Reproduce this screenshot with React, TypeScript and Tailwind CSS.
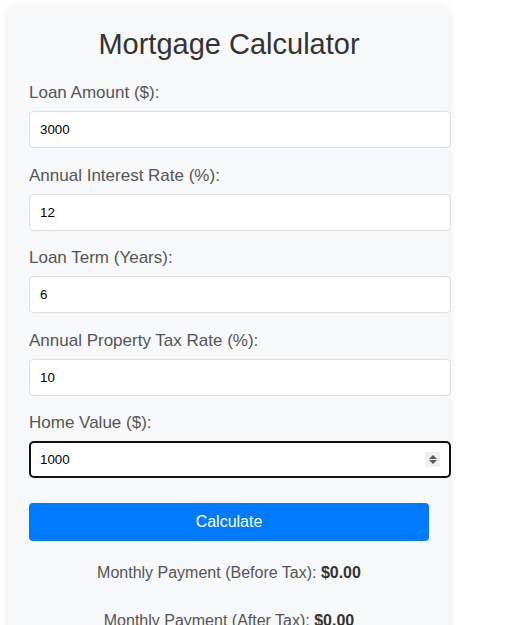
export default function App() {
  const fields = [
    { label: "Loan Amount ($):", value: "3000" },
    { label: "Annual Interest Rate (%):", value: "12" },
    { label: "Loan Term (Years):", value: "6" },
    { label: "Annual Property Tax Rate (%):", value: "10" },
  ];

  return (
    <div className="min-h-screen bg-white p-[8px] font-['Liberation_Sans',Arial,sans-serif]">
      <div className="w-[441px] rounded-[8px] bg-[#f7f8fa] pl-[21px] pr-[20px] pt-[20px] pb-[20px] shadow-[0_0_10px_rgba(0,0,0,0.1)]">
        <h1 className="mb-[22px] text-center text-[29px] leading-[33px] text-[#333]">
          Mortgage Calculator
        </h1>

        {fields.map((f) => (
          <div key={f.label} className="mb-[17.5px]">
            <label className="mb-[8px] block text-[17px] leading-[20px] text-[#555]">
              {f.label}
            </label>
            <div className="box-content h-[15px] w-[400px] rounded-[4px] border border-[#ddd] bg-white px-[10px] py-[10px] text-[13.33px] leading-[15px] text-black">
              {f.value}
            </div>
          </div>
        ))}

        {/* focused field */}
        <div className="mb-[25px]">
          <label className="mb-[8px] block text-[17px] leading-[20px] text-[#555]">
            Home Value ($):
          </label>
          <div className="relative box-content h-[15px] w-[400px] rounded-[5px] border-2 border-[#111] bg-white px-[9px] py-[9px] text-[13.33px] leading-[15px] text-black">
            1000
            <span className="absolute right-[9px] top-[9px] flex h-[15px] w-[15px] flex-col items-center justify-center gap-[1px] bg-[#efefef]">
              <span className="h-0 w-0 border-x-[4px] border-b-[4px] border-x-transparent border-b-[#555]" />
              <span className="h-0 w-0 border-x-[4px] border-t-[4px] border-x-transparent border-t-[#555]" />
            </span>
          </div>
        </div>

        <button className="block h-[38px] w-[400px] rounded-[4px] bg-[#007bff] text-[16px] text-white">
          Calculate
        </button>

        <p className="mt-[23px] text-center text-[16px] leading-[18px] text-[#555]">
          Monthly Payment (Before Tax): <b className="text-[#333]">$0.00</b>
        </p>
        <p className="mt-[30px] text-center text-[16px] leading-[18px] text-[#555]">
          Monthly Payment (After Tax): <b className="text-[#333]">$0.00</b>
        </p>
      </div>
    </div>
  );
}
